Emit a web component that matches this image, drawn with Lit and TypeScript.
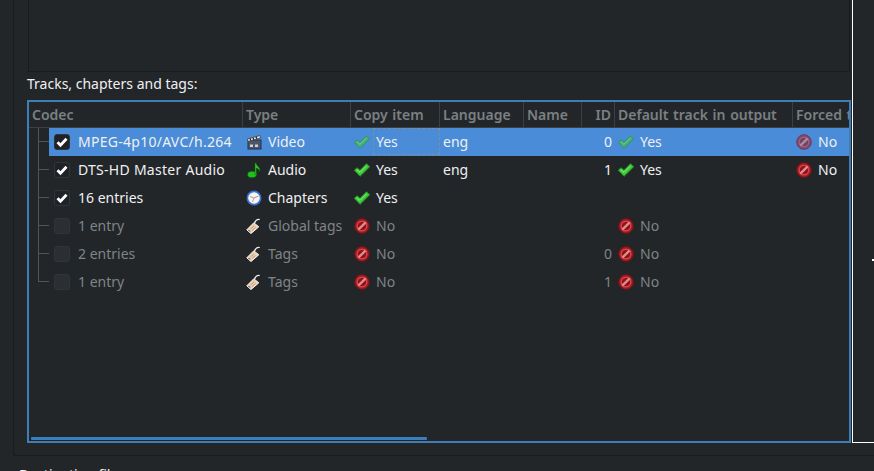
import { LitElement, html, css, svg } from "lit";
import { customElement } from "lit/decorators.js";

const check = svg`<svg class="ic" viewBox="0 0 16 16"><path d="M0.300 8.300 L3 5.800 L6 8.300 L12.500 1.800 L15.700 4.800 L6 14.300 Z" fill="#3ccb35" stroke="#2a8f2c" stroke-width="1"/><path d="M2.800 7.600 L6 10.300 L12.500 3.800" fill="none" stroke="#8cec86" stroke-width="1"/></svg>`;
const no = svg`<svg class="ic" viewBox="0 0 16 16"><circle cx="8" cy="8" r="7.400" fill="#a8181e" stroke="#6e1216" stroke-width=".8"/><circle cx="8" cy="8" r="4.800" fill="#8e1216" stroke="#c84a50" stroke-width="1.400"/><path d="M4.300 11.700 L11.700 4.300" stroke="#e08a8c" stroke-width="2.400"/></svg>`;
const film = svg`<svg class="ic" viewBox="0 0 16 16"><rect x="2" y="6" width="13" height="9" fill="#4a5670" stroke="#2a3040"/><path d="M1.500 5 L14 1.500 L14.500 4 L2 7.500 Z" fill="#e4e4e4" stroke="#333" stroke-width=".7"/><path d="M4 4.400 L4.800 6.500 M7 3.600 L7.800 5.700 M10 2.700 L10.800 4.800" stroke="#222" stroke-width="1.200"/><path d="M4 10.500h3v2.500h-3z M9 10.500h3v2.500h-3z" fill="#c8d0dc"/></svg>`;
const note = svg`<svg class="ic" viewBox="0 0 16 16"><ellipse cx="6" cy="12.500" rx="4.500" ry="3.200" fill="#1fc01f" stroke="#0b5c0b" stroke-width=".7"/><path d="M9 12.500 V1 L10 1 C10.500 4.500 14.800 5 13.800 9.500 C13 7 11.500 6.500 10.300 6 V12.500 Z" fill="#2ad02a" stroke="#0b5c0b" stroke-width=".5"/></svg>`;
const clock = svg`<svg class="ic" viewBox="0 0 16 16"><circle cx="8" cy="8" r="7.500" fill="#3a6fd8"/><circle cx="8" cy="8" r="5.800" fill="#f6f4ee"/><path d="M8 8 L4 6.500 M8 8 L12.500 6" stroke="#8a8a8a" stroke-width=".8"/><path d="M8 8 L6.500 12" stroke="#e07070" stroke-width=".7"/></svg>`;
const tag = svg`<svg class="ic" viewBox="0 0 16 16"><path d="M0.800 11.800 L7.800 4.800 L12.800 8.800 L5 15.500 Z" fill="#eccfb0" stroke="#f8f8f8" stroke-width="1"/><path d="M4.500 11 L8 7.800 M6 12.500 L9.500 9.500" stroke="#b88a68" stroke-width=".8"/><path d="M8.500 5 C9.500 2.500 11.500 .8 13.800 1.500" fill="none" stroke="#e8e8e8" stroke-width="1.300"/><path d="M2.500 12 l1.500 1.500" stroke="#222" stroke-width="1"/></svg>`;

type Row = { codec: string; on: boolean; typeIcon: unknown; type: string; copy: boolean; lang?: string; id?: string; def?: boolean; forced?: boolean; sel?: boolean; last?: boolean; wide?: boolean };
const rows: Row[] = [
  { codec: "MPEG-4p10/AVC/h.264", on: true, typeIcon: film, type: "Video", copy: true, lang: "eng", id: "0", def: true, forced: false, sel: true, wide: true },
  { codec: "DTS-HD Master Audio", on: true, typeIcon: note, type: "Audio", copy: true, lang: "eng", id: "1", def: true, forced: false, wide: true },
  { codec: "16 entries", on: true, typeIcon: clock, type: "Chapters", copy: true },
  { codec: "1 entry", on: false, typeIcon: tag, type: "Global tags", copy: false, def: false },
  { codec: "2 entries", on: false, typeIcon: tag, type: "Tags", copy: false, id: "0", def: false },
  { codec: "1 entry", on: false, typeIcon: tag, type: "Tags", copy: false, id: "1", def: false, last: true },
];

@customElement("app-root")
export class AppRoot extends LitElement {
  static styles = css`
    :host { display: block; width: 874px; height: 471px; overflow: hidden; background: #232629; color: #eff0f1; font: 14px/20px "Noto Sans", sans-serif; }
    .group { margin-left: 13px; height: 456px; width: 861px; box-sizing: border-box; border-left: 1px solid #191b1d; border-bottom: 1px solid #191b1d; border-bottom-left-radius: 3px; padding-left: 13px; display: flex; flex-direction: column; }
    .dest { margin: 9px 0 0 19px; }
    .top { height: 72px; width: 822px; flex: none; box-sizing: border-box; border-left: 1px solid #191b1d; border-right: 1px solid #191b1d; border-bottom: 1px solid #191b1d; margin-left: 1px; }
    .label { height: 28px; flex: none; line-height: 24px; }
    .body { display: flex; height: 343px; flex: none; }
    .tree { width: 824px; height: 343px; flex: none; box-sizing: border-box; border: 2px solid #3d7db8; position: relative; overflow: hidden; }
    .side { flex: 1; border-left: 1px solid #fff; border-bottom: 1px solid #fff; margin: -100px 0 0 1px; position: relative; }
    .dash { position: absolute; right: 0; top: 259px; width: 2px; height: 2px; background: #fff; }
    .row { display: grid; grid-template-columns: 214px 108px 89px 84px 58px 33px 178px 60px; }
    .head { height: 26px; box-sizing: border-box; border-bottom: 1px solid #3b4045; color: #7b8083; font-weight: 600; word-spacing: 1px; }
    .head > div { border-right: 1px solid #3b4045; padding-left: 3px; line-height: 25px; white-space: nowrap; overflow: hidden; }
    .head > div:last-child { border-right: 0; }
    .head > .idh { text-align: right; padding-right: 3px; }
    .data { height: 28px; position: relative; }
    .data.off { color: #7f8487; }
    .cell { display: flex; align-items: center; white-space: nowrap; padding-left: 3px; height: 28px; box-sizing: border-box; position: relative; }
    .cell.num { justify-content: flex-end; padding-right: 3px; }
    .cell.codec { padding-left: 0; }
    .wide { letter-spacing: .27px; }
    .hl { position: absolute; left: 20px; right: 0; top: 0; height: 28px; background: #4a8cd8; }
    .focus { flex: 1; height: 27px; margin-bottom: 1px; border: 1px dashed #7e8f9c; box-sizing: border-box; display: flex; align-items: center; padding-left: 2px; }
    .plain { padding-left: 3px; }
    .branch { width: 11px; height: 28px; flex: none; position: relative; margin-left: 9px; }
    .branch::before { content: ""; position: absolute; left: 0; top: 0; bottom: 0; width: 1px; background: #50555a; }
    .branch::after { content: ""; position: absolute; left: 0; top: 13px; width: 11px; height: 1px; background: #50555a; }
    .branch.end::before { bottom: 14px; }
    .box { width: 16px; height: 16px; flex: none; box-sizing: border-box; margin: 0 8px 0 5px; border: 1px solid #30353a; border-radius: 3px; background: #2b2f33; display: flex; align-items: center; justify-content: center; }
    .box.on { background: #1f2226; }
    .box svg { width: 12px; height: 12px; display: block; }
    .ic { width: 16px; height: 16px; flex: none; display: block; margin-right: 3px; }
    .type .ic { margin-right: 6px; }
    .sel .ic { opacity: .62; }
    .sel .type .ic { opacity: 1; }
    .bar { position: absolute; left: 2px; bottom: 1px; width: 396px; height: 3px; background: #3d7db8; border-radius: 1px; }
  `;

  private yn(v: boolean | undefined, focus = false) {
    if (v === undefined) return html`<div class="cell"></div>`;
    const body = v ? "Yes" : "No";
    return focus
      ? html`<div class="cell">${v ? check : no}<span class="focus">${body}</span></div>`
      : html`<div class="cell">${v ? check : no}<span class="plain">${body}</span></div>`;
  }

  render() {
    return html`
      <div class="group">
        <div class="top"></div>
        <div class="label">Tracks, chapters and tags:</div>
        <div class="body">
          <div class="tree">
            <div class="row head">
              <div>Codec</div><div>Type</div><div>Copy item</div><div>Language</div><div>Name</div>
              <div class="idh">ID</div><div>Default track in output</div><div>Forced track</div>
            </div>
            ${rows.map((r) => html`
              <div class="row data ${r.sel ? "sel" : ""} ${r.on ? "" : "off"}">
                ${r.sel ? html`<div class="hl"></div>` : ""}
                <div class="cell codec">
                  <span class="branch ${r.last ? "end" : ""}"></span>
                  <span class="box ${r.on ? "on" : ""}">
                    ${r.on ? svg`<svg viewBox="0 0 12 12"><path d="M1.500 6.200 L4.500 9.200 L10.500 2.800" fill="none" stroke="#fff" stroke-width="2.800"/></svg>` : ""}
                  </span>
                  <span class="${r.wide ? "wide" : ""}">${r.codec}</span>
                </div>
                <div class="cell type">${r.typeIcon}<span>${r.type}</span></div>
                ${this.yn(r.copy, !!r.sel)}
                <div class="cell"><span>${r.lang ?? ""}</span></div>
                <div class="cell"></div>
                <div class="cell num"><span>${r.id ?? ""}</span></div>
                ${this.yn(r.def)}
                ${this.yn(r.forced)}
              </div>`)}
            <div class="bar"></div>
          </div>
          <div class="side"><div class="dash"></div></div>
        </div>
      </div>
      <div class="dest">Destination file:</div>
    `;
  }
}
